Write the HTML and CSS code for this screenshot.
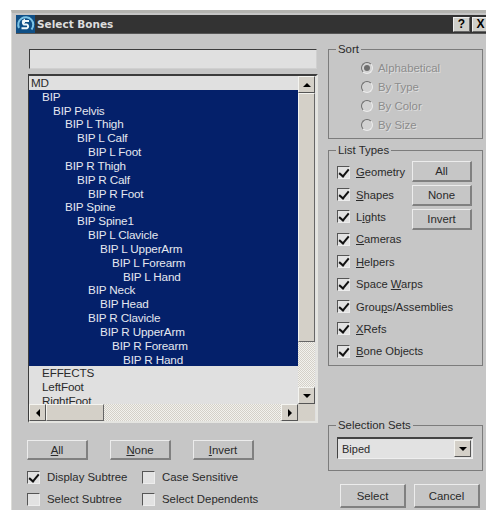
FILE: index.html
```html
<!DOCTYPE html>
<html lang="en">
<head>
<meta charset="utf-8">
<title>Select Bones</title>
<link rel="stylesheet" href="styles.css">
</head>
<body>
<div class="window">
  <header class="titlebar">
    <svg class="app-icon" width="19" height="18" viewBox="0 0 19 18">
      <rect width="19" height="18" fill="#0f4f86"/>
      <path d="M3 13A7.5 7.5 0 1 1 15.5 14.5" fill="none" stroke="#7cc4e6" stroke-width="2"/>
      <path d="M13 6H8a2 2 0 0 0 0 3.6h3a2 2 0 0 1 0 3.6H5.5" fill="none" stroke="#f2f8fb" stroke-width="2"/>
      <path d="M9 3.4L5.6 6L9 8.4Z" fill="#f2f8fb"/>
    </svg>
    <span class="title">Select Bones</span>
    <span class="caption-btn">?</span>
    <span class="caption-btn">X</span>
  </header>

  <div class="content">
    <section class="left">
      <div class="search"></div>

      <div class="listbox">
        <ul class="rows">
          <li>MD</li>
          <li class="sel lv1">BIP</li>
          <li class="sel lv2">BIP Pelvis</li>
          <li class="sel lv3">BIP L Thigh</li>
          <li class="sel lv4">BIP L Calf</li>
          <li class="sel lv5">BIP L Foot</li>
          <li class="sel lv3">BIP R Thigh</li>
          <li class="sel lv4">BIP R Calf</li>
          <li class="sel lv5">BIP R Foot</li>
          <li class="sel lv3">BIP Spine</li>
          <li class="sel lv4">BIP Spine1</li>
          <li class="sel lv5">BIP L Clavicle</li>
          <li class="sel lv6">BIP L UpperArm</li>
          <li class="sel lv7">BIP L Forearm</li>
          <li class="sel lv8">BIP L Hand</li>
          <li class="sel lv5">BIP Neck</li>
          <li class="sel lv6">BIP Head</li>
          <li class="sel lv5">BIP R Clavicle</li>
          <li class="sel lv6">BIP R UpperArm</li>
          <li class="sel lv7">BIP R Forearm</li>
          <li class="sel lv8">BIP R Hand</li>
          <li class="lv1">EFFECTS</li>
          <li class="lv1">LeftFoot</li>
          <li class="lv1">RightFoot</li>
        </ul>
        <div class="vscroll">
          <span class="arrow-btn"><i class="tri up"></i></span>
          <span class="thumb-v"></span>
          <span class="track"></span>
          <span class="arrow-btn"><i class="tri down"></i></span>
        </div>
        <div class="hscroll">
          <span class="arrow-btn"><i class="tri left-tri"></i></span>
          <span class="thumb-h"></span>
          <span class="track"></span>
          <span class="arrow-btn"><i class="tri right-tri"></i></span>
        </div>
        <div class="corner"></div>
      </div>

      <div class="actions">
        <button class="btn"><u>A</u>ll</button>
        <button class="btn"><u>N</u>one</button>
        <button class="btn"><u>I</u>nvert</button>
      </div>

      <div class="options">
        <label class="check"><span class="box on"></span>Display Subtree</label>
        <label class="check"><span class="box"></span>Case Sensitive</label>
        <label class="check"><span class="box"></span>Select Subtree</label>
        <label class="check"><span class="box"></span>Select Dependents</label>
      </div>
    </section>

    <aside class="right">
      <fieldset class="group sort">
        <legend>Sort</legend>
        <div class="radio"><span class="dot on"></span>Alphabetical</div>
        <div class="radio"><span class="dot"></span>By Type</div>
        <div class="radio"><span class="dot"></span>By Color</div>
        <div class="radio"><span class="dot"></span>By Size</div>
      </fieldset>

      <fieldset class="group types">
        <legend>List Types</legend>
        <div class="type-cols">
          <div class="type-checks">
            <label class="check"><span class="box on"></span><span><u>G</u>eometry</span></label>
            <label class="check"><span class="box on"></span><span><u>S</u>hapes</span></label>
            <label class="check"><span class="box on"></span><span>L<u>i</u>ghts</span></label>
            <label class="check"><span class="box on"></span><span><u>C</u>ameras</span></label>
            <label class="check"><span class="box on"></span><span><u>H</u>elpers</span></label>
            <label class="check"><span class="box on"></span><span>Space <u>W</u>arps</span></label>
            <label class="check"><span class="box on"></span><span>Grou<u>p</u>s/Assemblies</span></label>
            <label class="check"><span class="box on"></span><span><u>X</u>Refs</span></label>
            <label class="check"><span class="box on"></span><span><u>B</u>one Objects</span></label>
          </div>
          <div class="type-btns">
            <button class="btn">All</button>
            <button class="btn">None</button>
            <button class="btn">Invert</button>
          </div>
        </div>
      </fieldset>

      <fieldset class="group sets">
        <legend>Selection Sets</legend>
        <div class="combo">
          <span class="combo-value">Biped</span>
          <span class="arrow-btn"><i class="tri down"></i></span>
        </div>
      </fieldset>

      <div class="dialog-btns">
        <button class="btn">Select</button>
        <button class="btn">Cancel</button>
      </div>
    </aside>
  </div>
</div>
</body>
</html>
```

FILE: styles.css
```css
* { box-sizing: border-box; }

html, body { margin: 0; padding: 0; background: #fff; }

body {
  font-family: "Liberation Sans", Arial, sans-serif;
  font-size: 11.4px;
  color: #2a2a2a;
  height: 510px;
  overflow: hidden;
}

.window {
  margin: 10px 0 0 11px;
  width: 475px;
  height: 500px;
  background: #c6c6c6;
  border-top: 3px solid #b4b4b0;
  border-left: 1px solid #dcdcd8;
  padding-top: 2px;
  overflow: hidden;
}

/* Title bar */
.titlebar {
  display: flex;
  align-items: center;
  height: 19px;
  margin-left: 4px;
  background: #333;
  border-bottom: 1px solid #555;
}

.app-icon { flex: none; }

.title {
  flex: 1;
  margin-left: 2px;
  font-family: "DejaVu Sans", sans-serif;
  font-weight: 700;
  font-size: 10.5px;
  color: #ddd;
}

.caption-btn {
  flex: none;
  width: 17px;
  height: 15px;
  margin-left: 2px;
  background: #cfcfca;
  border-top: 1px solid #eee;
  border-left: 1px solid #eee;
  border-right: 1px solid #666;
  border-bottom: 1px solid #666;
  font-weight: 700;
  font-size: 12px;
  line-height: 13px;
  text-align: center;
  color: #000;
}

.caption-btn:last-child { margin-right: -3px; }

.content { display: flex; height: 461px; }

/* Left column */
.left { flex: none; width: 316px; padding-left: 15px; }

.search {
  width: 288px;
  height: 20px;
  margin-top: 15px;
  margin-left: 2px;
  background: #e0e0e0;
  border-top: 1px solid #3c3c3c;
  border-left: 1px solid #3c3c3c;
  border-right: 1px solid #d0d0d0;
  border-bottom: 1px solid #d0d0d0;
}

.listbox {
  display: grid;
  grid-template-columns: 269px 17px;
  grid-template-rows: 328px 17px;
  width: 290px;
  height: 349px;
  margin-top: 5px;
  margin-left: 1px;
  background: #e0e0e0;
  border-top: 2px solid #3c3c3c;
  border-left: 1px solid #3c3c3c;
  border-right: 2px solid #e4e4e0;
  border-bottom: 2px solid #e4e4e0;
}

.rows {
  list-style: none;
  margin: 0;
  padding: 0;
  overflow: hidden;
  font-size: 11.7px;
  letter-spacing: -0.15px;
}

.rows li { height: 13.83px; line-height: 14px; padding-left: 2px; white-space: nowrap; }
.rows .sel { background: #04206a; color: #e4e8f0; }
.rows .lv1 { padding-left: 13px; }
.rows .lv2 { padding-left: 24px; }
.rows .lv3 { padding-left: 36px; }
.rows .lv4 { padding-left: 48px; }
.rows .lv5 { padding-left: 59px; }
.rows .lv6 { padding-left: 71px; }
.rows .lv7 { padding-left: 83px; }
.rows .lv8 { padding-left: 94px; }

/* Scroll bars */
.vscroll, .hscroll { display: flex; }
.vscroll { flex-direction: column; }

.arrow-btn {
  flex: none;
  display: flex;
  align-items: center;
  justify-content: center;
  width: 17px;
  height: 17px;
  background: #d4d0c8;
  border-top: 1px solid #f4f4f0;
  border-left: 1px solid #f4f4f0;
  border-right: 1px solid #555;
  border-bottom: 1px solid #555;
}

.track {
  flex: 1;
  background: repeating-conic-gradient(#f2f2ee 0 25%, #d4d0c8 0 50%) 0 0 / 2px 2px;
}

.thumb-v {
  flex: none;
  height: 249px;
  background: #d4d0c8;
  border-top: 1px solid #f4f4f0;
  border-left: 1px solid #f4f4f0;
  border-right: 1px solid #666;
  border-bottom: 1px solid #666;
}

.thumb-h {
  flex: none;
  width: 58px;
  background: #d4d0c8;
  border-top: 1px solid #f4f4f0;
  border-left: 1px solid #f4f4f0;
  border-right: 1px solid #666;
  border-bottom: 1px solid #666;
}

.corner { background: #d4d0c8; }

.tri { display: block; width: 0; height: 0; border: 4px solid transparent; }
.tri.up { border-bottom-color: #000; border-top-width: 0; }
.tri.down { border-top-color: #000; border-bottom-width: 0; }
.tri.left-tri { border-right-color: #000; border-left-width: 0; }
.tri.right-tri { border-left-color: #000; border-right-width: 0; }

/* Buttons */
.btn {
  margin: 0;
  padding: 0;
  font: inherit;
  color: #2a2a2a;
  background: #c6c6c6;
  border-top: 1px solid #ececec;
  border-left: 1px solid #ececec;
  border-right: 2px solid #808080;
  border-bottom: 2px solid #808080;
}

.actions {
  display: flex;
  gap: 22px;
  margin-top: 17px;
}

.actions .btn { width: 61px; height: 20px; }

.options {
  display: grid;
  grid-template-columns: 115px 1fr;
  grid-auto-rows: 22px;
  margin-top: 6px;
}

/* Check boxes */
.check { display: flex; align-items: center; white-space: nowrap; }

.box {
  flex: none;
  position: relative;
  width: 13px;
  height: 13px;
  margin-right: 7px;
  background: #e2e2e2;
  border-top: 1px solid #555;
  border-left: 1px solid #555;
  border-right: 1px solid #ededed;
  border-bottom: 1px solid #ededed;
}

.box.on::after {
  content: "";
  position: absolute;
  left: 3px;
  top: 0;
  width: 4px;
  height: 8px;
  border-right: 2px solid #111;
  border-bottom: 2px solid #111;
  transform: rotate(40deg);
}

/* Right column */
.right { flex: none; width: 155px; }

.group {
  margin: 0;
  padding: 0;
  min-width: 0;
  border: 1px solid #7c7c7c;
}

.group legend {
  margin-left: 7px;
  padding: 0 2px;
  height: 14px;
  line-height: 14px;
}

.sort { height: 97px; margin-top: 8px; padding-top: 2px; }

.radio {
  display: flex;
  align-items: center;
  height: 19px;
  margin-left: 32px;
  color: #8c8c8c;
  text-shadow: 1px 1px 0 #dedede;
}

.dot {
  flex: none;
  position: relative;
  width: 12px;
  height: 12px;
  margin-right: 5px;
  border-radius: 50%;
  background: #d2d2d2;
  border-top: 1px solid #6e6e6e;
  border-left: 1px solid #6e6e6e;
  border-right: 1px solid #ececec;
  border-bottom: 1px solid #ececec;
}

.dot.on::after {
  content: "";
  position: absolute;
  left: 2px;
  top: 2px;
  width: 6px;
  height: 6px;
  border-radius: 50%;
  background: #6e6e6e;
}

.types { height: 223px; margin-top: 4px; padding-top: 4px; }

.type-cols { display: flex; margin-left: 8px; }

.type-checks { flex: none; width: 75px; display: flex; flex-direction: column; font-size: 11.2px; }

.type-checks .check { height: 22.4px; }

.type-checks .box { margin-right: 6px; }

.type-btns {
  display: flex;
  flex-direction: column;
  gap: 3px;
  margin-top: 0;
}

.type-btns .btn { width: 60px; height: 21px; }

.sets { height: 53px; margin-top: 52px; padding-top: 5px; }

.combo {
  display: flex;
  align-items: center;
  justify-content: space-between;
  width: 136px;
  height: 22px;
  margin-left: 8px;
  padding-left: 4px;
  padding-right: 1px;
  background: #e2e2e2;
  border-top: 2px solid #444;
  border-left: 1px solid #444;
  border-right: 1px solid #eee;
  border-bottom: 1px solid #eee;
  font-size: 11px;
}

.dialog-btns {
  display: flex;
  gap: 8px;
  margin-top: 13px;
  padding-left: 12px;
}

.dialog-btns .btn { width: 66px; height: 24px; }
```
